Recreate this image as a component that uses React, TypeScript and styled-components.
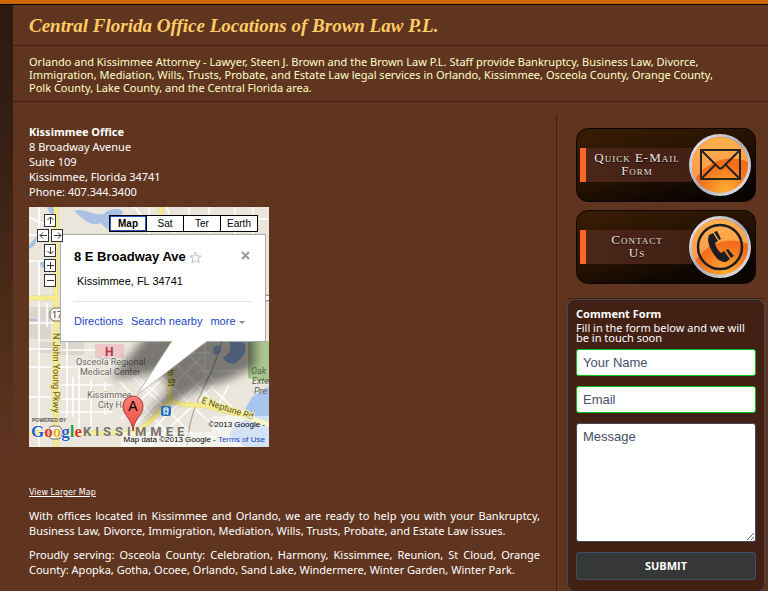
import React from "react";
import styled, { createGlobalStyle } from "styled-components";

const sans = `"Noto Sans", "Open Sans", Verdana, sans-serif`;
const arial = `"Liberation Sans", Arial, sans-serif`;

const GlobalStyle = createGlobalStyle`
  *, *::before, *::after { box-sizing: border-box; }
  body { margin: 0; background: #5f351f; color: #fff; font: 11px/15px ${sans}; }
  h1, h2, h3, p, address { margin: 0; font-style: normal; }
`;

const Page = styled.div`
  min-height: 100vh;
  display: flex;
  flex-direction: column;
  border-top: 4px solid #cc6600;
  overflow: hidden;
`;

const Frame = styled.div`
  flex: 1;
  display: grid;
  grid-template-columns: 13px minmax(0, 1fr);
  border-top: 1px solid #000;
`;

const Edge = styled.div`
  background: linear-gradient(#2b190f, #382013 150px, #5f351f 460px);
`;

const Content = styled.div`
  display: flex;
  flex-direction: column;
`;

const Title = styled.h1`
  padding: 9px 16px 7px;
  border-bottom: 1px solid #42210f;
  color: #ffcc66;
  font: italic bold 19px/24px "Liberation Serif", "Times New Roman", serif;
`;

const Intro = styled.p`
  padding: 9px 36px 7px 16px;
  border-bottom: 1px solid #42210f;
  color: #ffffcc;
  line-height: 13px;
`;

const Columns = styled.div`
  flex: 1;
  display: grid;
  grid-template-columns: minmax(0, 1fr) 211px;
  padding-top: 13px;
`;

const Main = styled.main`
  padding: 9px 16px 8px;
  border-right: 1px solid #42210f;
`;

const Address = styled.address`
  margin-bottom: 8px;
`;

const MapBox = styled.section`
  position: relative;
  width: 240px;
  height: 240px;
  overflow: hidden;
  color: #000;
  font-family: ${arial};
`;

const MapNav = styled.div`
  position: absolute;
  top: 7px;
  left: 8px;
  display: flex;
  flex-direction: column;
  align-items: center;
  gap: 2px;
`;

const NavRow = styled.div`
  display: flex;
  gap: 2px;
`;

const NavButton = styled.button`
  display: grid;
  place-items: center;
  width: 12px;
  height: 13px;
  padding: 0;
  border: 1px solid #333;
  background: #fff;
  svg { width: 9px; height: 9px; stroke: #333; fill: none; }
`;

const MapTypes = styled.div`
  position: absolute;
  top: 8px;
  left: 80px;
  display: grid;
  grid-template-columns: repeat(4, 37px);
`;

const TypeButton = styled.button<{ $active?: boolean }>`
  height: 17px;
  width: 38px;
  padding: 0;
  border: 1px solid #000;
  outline: ${(p) => (p.$active ? "1px solid #2a55b8" : "none")};
  outline-offset: -2px;
  background: #fff;
  color: #000;
  font: ${(p) => (p.$active ? "bold" : "normal")} 10px/15px ${arial};
`;

const InfoWindow = styled.div`
  position: absolute;
  top: 27px;
  left: 31px;
  width: 206px;
  height: 108px;
  padding: 14px 13px;
  border: 1px solid #aaa;
  background: #fff;
  font-size: 11px;
  line-height: 14px;
`;

const PlaceHead = styled.div`
  display: flex;
  align-items: center;
  gap: 3px;
  height: 16px;
`;

const PlaceName = styled.h2`
  font: bold 13px/16px ${arial};
  white-space: nowrap;
`;

const IconButton = styled.button<{ $end?: boolean }>`
  display: flex;
  width: 13px;
  height: 13px;
  margin-left: ${(p) => (p.$end ? "auto" : "0")};
  padding: 0;
  border: 0;
  background: none;
`;

const PlaceAddress = styled.p`
  padding: 9px 3px 13px;
  border-bottom: 1px solid #e6e4df;
`;

const PlaceLinks = styled.div`
  display: flex;
  gap: 8px;
  padding-top: 12px;
  a { color: #1a46c4; text-decoration: none; white-space: nowrap; }
`;

const Credits = styled.div`
  position: absolute;
  right: 0;
  bottom: 0;
  padding: 1px 4px 0 0;
  font-size: 8px;
  line-height: 15px;
  text-align: right;
  white-space: nowrap;
  a { color: #1a46c4; text-decoration: none; }
`;

const LargerMap = styled.a`
  display: block;
  width: fit-content;
  margin: 38px 0 8px;
  color: #fff;
  font-family: "DejaVu Sans", Verdana, sans-serif;
  font-size: 8px;
`;

const Copy = styled.p`
  margin-bottom: 9px;
  text-align: justify;
`;

const Sidebar = styled.aside`
  padding: 13px 3px 0 10px;
`;

const Actions = styled.nav`
  display: flex;
  flex-direction: column;
  gap: 8px;
  padding: 0 9px 14px;
  border-bottom: 1px solid #42210f;
`;

const ActionLink = styled.a`
  display: flex;
  align-items: center;
  height: 74px;
  padding: 0 3px;
  border: 1px solid #0d0602;
  border-radius: 12px;
  background: linear-gradient(165deg, #361b04 10%, #241102 50%, #0a0401 85%);
  color: #eee6df;
  text-decoration: none;
`;

const ActionLabel = styled.span`
  flex: 1;
  display: grid;
  place-items: center;
  height: 34px;
  margin-right: -4px;
  padding: 0 4px 2px 0;
  border-left: 6px solid #ff6622;
  background: linear-gradient(90deg, #4b2619, #422014);
  font: small-caps 13px/13px "Liberation Serif", serif;
  letter-spacing: 1px;
  text-align: center;
  text-shadow: 0 1px 1px #000;
`;

const Badge = styled.svg`
  flex: none;
  width: 64px;
  height: 64px;
`;

const CommentForm = styled.form`
  display: flex;
  flex-direction: column;
  gap: 10px;
  padding: 9px 8px 11px;
  border: 1px solid #434956;
  border-radius: 8px;
  background: #422014;
`;

const FormHead = styled.div`
  display: grid;
  gap: 4px;
  margin-bottom: -4px;
`;

const FormTitle = styled.h3`
  font: bold 11px/10px ${sans};
`;

const FormIntro = styled.p`
  font-size: 11px;
  line-height: 10px;
`;

const Field = styled.input`
  width: 100%;
  height: 27px;
  padding: 0 6px;
  border: 1px solid #00c41a;
  border-radius: 3px;
  background: #fff;
  color: #46506a;
  font: 13px/16px ${arial};
  &::placeholder { color: #46506a; opacity: 1; }
`;

const MessageField = styled(Field)`
  display: block;
  height: 119px;
  padding: 5px 6px;
  border-color: #434c5e;
  resize: both;
`;

const Submit = styled.button`
  height: 28px;
  border: 1px solid #3f4f63;
  border-radius: 3px;
  background: #353836;
  color: #fff;
  font: bold 11px/14px "Open Sans", ${sans};
`;

const streets = [
  "M0 28H30M0 54H30M10 0V26M0 10L26 22M10 54V90M0 116H28M10 92V240M18 96V120",
  "M0 142H26M0 160H26M0 190H22M32 143H84M38 135V210M32 160H60M50 160V225M62 172V225M32 178H84M32 192H58M32 205H84M76 175V208M84 150L132 190M44 170V210",
  "M92 212L150 156M100 224L172 150M112 234L176 170M120 240L186 178M90 174L152 240M104 170L170 234M122 160L192 226M140 150L180 190M150 138L186 174",
  "M104 -2L122 20M120 0V28M138 0L146 26M160 0V26M180 0V26M206 0V27M224 0V27M236 30V134M105 12H240",
  "M176 135V170M160 146H180M168 164H212M180 178L214 210M200 178L188 200M196 210L216 204",
];

function MapDrawing() {
  return (
    <svg width="240" height="240" viewBox="0 0 240 240" role="img" aria-label="Map of Kissimmee" fontFamily="Roboto, sans-serif">
      <defs>
        <filter id="soft" x="-20%" y="-20%" width="140%" height="140%"><feGaussianBlur stdDeviation="4" /></filter>
        <linearGradient id="pin" x1="0" y1="0" x2="0" y2="1"><stop stopColor="#ff8078" /><stop offset="1" stopColor="#e5483f" /></linearGradient>
      </defs>
      <rect width="240" height="240" fill="#ebe6dc" />
      <path d="M0 100H22V132H0ZM8 135H26V146H8ZM30 135H55V148H30Z" fill="#dcd5ce" />
      <path d="M45 4C54 0 64 9 75 7C79 2 90 0 94 5C89 12 101 14 104 22C100 28 77 26 72 16C62 20 55 13 45 4ZM-1 39L8 29L6 38L-1 43ZM18 0C20 6 24 10 28 6V0ZM12 54C18 51 22 57 17 60C12 62 10 58 12 54ZM0 112H8V114H0Z" fill="#a9c1e3" />
      <path d="M219 134H240V176L219 171Z" fill="#abc58f" />
      <path d="M185 140C191 135 195 142 190 147C185 150 183 145 185 140ZM200 135C203 142 200 148 194 150C197 158 206 158 210 153C216 148 219 142 214 134Z" fill="#8fb0e6" />
      <path d="M240 179L223 190L216 202L224 209L205 218L200 229L216 240H240ZM70 148C76 145 82 148 86 146L84 151L71 153Z" fill="#a9c5ee" />
      <g stroke="#fff" strokeWidth="1.6" fill="none">{streets.map((d) => <path key={d} d={d} />)}</g>
      <path d="M158 238C162 190 182 178 193 134" stroke="#aaa79f" strokeWidth="1.2" fill="none" />
      <path d="M27 0V240M0 91H30M132 0V8M0 226H104C120 218 130 205 141 193V134M139 191C150 201 166 196 182 200S218 209 240 218" stroke="#e2d68a" strokeWidth="5" fill="none" />
      <path d="M27 0V240M0 91H30M132 0V8M0 226H104C120 218 130 205 141 193V134M139 191C150 201 166 196 182 200S218 209 240 218" stroke="#f5ec8c" strokeWidth="4" fill="none" />
      <rect x="66" y="137" width="29" height="14" fill="#edc8c7" />
      <text x="76" y="149" fontSize="12" fontWeight="bold" fill="#b63746">H</text>
      <g fontSize="9" fill="#6b6762" stroke="#f2eee8" strokeWidth="2" paintOrder="stroke">
        <text x="47" y="158">Osceola Regional</text><text x="51" y="168">Medical Center</text>
        <text x="58" y="191">Kissimmee</text><text x="69" y="201">City Ha</text>
      </g>
      <g fontSize="9" fill="#5b5530" stroke="#f5ec8c" strokeWidth="2" paintOrder="stroke">
        <text transform="translate(24 126) rotate(90)">N John Young Pkwy</text>
        <text transform="translate(139 157) rotate(90)">ain St</text>
        <text transform="translate(172 196) rotate(18)">E Neptune Rd</text>
      </g>
      <path d="M82 172L118 128H226V160L200 172L165 184L112 214L142 180L128 166Z" fill="#111" opacity=".5" filter="url(#soft)" />
      <g fontSize="9" fontStyle="italic" fill="#526348"><text x="222" y="167">Oak</text><text x="223" y="177">Exte</text><text x="225" y="187">Pre</text></g>
      <rect x="132" y="199" width="10" height="10" rx="2" fill="#2a70bc" />
      <path d="M135 201H139V206H135ZM135 203H139M135 208L136 206M139 208L138 206" stroke="#fff" fill="none" />
      <rect x="183" y="209" width="57" height="16" fill="#fff" opacity=".5" /><rect x="92" y="225" width="148" height="15" fill="#fff" opacity=".5" />
      <g fill="#faf8f0" stroke="#6b6762"><rect x="21" y="101" width="14" height="13" rx="5" /><rect x="19" y="219" width="14" height="13" rx="5" /></g>
      <text x="23" y="111" fontSize="9" fill="#333">17</text>
      <circle cx="238" cy="91" r="3" fill="#fff" stroke="#777" />
      <text x="54" y="229" fontSize="13" fontWeight="bold" letterSpacing="4" fill="#77736e" stroke="#eeeae2" paintOrder="stroke">KISSIMMEE</text>
      <text x="3" y="215" fontFamily="Liberation Sans" fontSize="5" fontWeight="bold" fill="#555">POWERED BY</text>
      <text x="2" y="230" fontFamily="Liberation Serif" fontSize="17" fontWeight="bold" stroke="#fff" strokeWidth="1" paintOrder="stroke">
        <tspan fill="#275dcc">G</tspan><tspan fill="#d73127">o</tspan><tspan fill="#e6b718">o</tspan><tspan fill="#275dcc">g</tspan><tspan fill="#2b9a42">l</tspan><tspan fill="#d73127">e</tspan>
      </text>
      <path d="M104 224C103 211 94 209 94 199A10 10 0 0 1 114 199C114 209 105 211 104 224Z" fill="url(#pin)" stroke="#a83832" />
      <text x="104" y="204" textAnchor="middle" fontFamily="Liberation Sans" fontSize="14" fill="#000">A</text>
    </svg>
  );
}

const WindowTail = styled.svg`
  position: absolute;
  top: 134px;
  left: 106px;
  width: 74px;
  height: 56px;
`;

const arrows = {
  up: "M4.5 8V1M1.5 4L4.5 1L7.5 4", left: "M8 4.5H1M4 1.5L1 4.5L4 7.5",
  right: "M1 4.5H8M5 1.5L8 4.5L5 7.5", down: "M4.5 1V8M1.5 5L4.5 8L7.5 5",
  plus: "M4.5 1V8M1 4.5H8", minus: "M1 4.5H8",
};

function Nav({ kind, label }: { kind: keyof typeof arrows; label: string }) {
  return <NavButton type="button" aria-label={label}><svg viewBox="0 0 9 9"><path d={arrows[kind]} /></svg></NavButton>;
}

function OfficeMap() {
  return (
    <MapBox aria-label="Office location">
      <MapDrawing />
      <InfoWindow>
        <PlaceHead>
          <PlaceName>8 E Broadway Ave</PlaceName>
          <IconButton type="button" aria-label="Save place">
            <svg width="13" height="13" viewBox="0 0 13 13"><path d="M6.5 1L8 5H12L9 7.5L10 12L6.5 9.5L3 12L4 7.5L1 5H5Z" fill="#fff" stroke="#bbb" /></svg>
          </IconButton>
          <IconButton type="button" aria-label="Close" $end>
            <svg width="13" height="13" viewBox="0 0 13 13"><path d="M3 1L10 8M10 1L3 8" stroke="#999" strokeWidth="2" /></svg>
          </IconButton>
        </PlaceHead>
        <PlaceAddress>Kissimmee, FL 34741</PlaceAddress>
        <PlaceLinks>
          <a href="#directions">Directions</a><a href="#nearby">Search nearby</a>
          <a href="#more">more <svg width="6" height="4" viewBox="0 0 6 4"><path d="M0 0H6L3 3Z" fill="#888" /></svg></a>
        </PlaceLinks>
      </InfoWindow>
      <WindowTail viewBox="0 0 74 56"><path d="M37 0L2 54L72 0" fill="#fff" stroke="#bbb" /><path d="M38 0H71" stroke="#fff" strokeWidth="3" /></WindowTail>
      <MapNav>
        <Nav kind="up" label="Pan up" />
        <NavRow><Nav kind="left" label="Pan left" /><Nav kind="right" label="Pan right" /></NavRow>
        <Nav kind="down" label="Pan down" />
        <Nav kind="plus" label="Zoom in" />
        <Nav kind="minus" label="Zoom out" />
      </MapNav>
      <MapTypes>
        <TypeButton type="button" $active>Map</TypeButton><TypeButton type="button">Sat</TypeButton>
        <TypeButton type="button">Ter</TypeButton><TypeButton type="button">Earth</TypeButton>
      </MapTypes>
      <Credits>
        <div>©2013 Google -</div>
        <div>Map data ©2013 Google - <a href="#terms">Terms of Use</a></div>
      </Credits>
    </MapBox>
  );
}

function OrangeDisc({ id, children }: { id: string; children: React.ReactNode }) {
  return (
    <Badge viewBox="0 0 64 64" aria-hidden="true">
      <defs>
        <linearGradient id={id + "ring"} x1="0" y1="0" x2="1" y2="1"><stop stopColor="#f2f2f5" /><stop offset=".5" stopColor="#a9a9b2" /><stop offset="1" stopColor="#eeeef4" /></linearGradient>
        <radialGradient id={id + "glow"} cx=".6" cy=".95" r=".8"><stop stopColor="#ffad32" /><stop offset=".6" stopColor="#f4701c" /><stop offset="1" stopColor="#ee6019" /></radialGradient>
        <linearGradient id={id + "shine"} x1="0" y1="0" x2="0" y2="1"><stop stopColor="#ffb04a" /><stop offset="1" stopColor="#fb9a4c" /></linearGradient>
      </defs>
      <circle cx="32" cy="32" r="31" fill={`url(#${id}ring)`} />
      <circle cx="32" cy="32" r="28" fill={`url(#${id}glow)`} />
      <path d="M4 36A28 28 0 0 1 60 29C42 21 20 27 8 45Q4 42 4 36Z" fill={`url(#${id}shine)`} />
      {children}
    </Badge>
  );
}

export default function App() {
  return (
    <>
      <GlobalStyle />
      <Page>
        <Frame>
          <Edge />
          <Content>
            <Title>Central Florida Office Locations of Brown Law P.L.</Title>
            <Intro>Orlando and Kissimmee Attorney - Lawyer, Steen J. Brown and the Brown Law P.L. Staff provide Bankruptcy, Business Law, Divorce, Immigration, Mediation, Wills, Trusts, Probate, and Estate Law legal services in Orlando, Kissimmee, Osceola County, Orange County, Polk County, Lake County, and the Central Florida area.</Intro>
            <Columns>
              <Main>
                <Address>
                  <strong>Kissimmee Office</strong><br />8 Broadway Avenue<br />Suite 109<br />Kissimmee, Florida 34741<br />Phone: 407.344.3400
                </Address>
                <OfficeMap />
                <LargerMap href="#map">View Larger Map</LargerMap>
                <Copy>With offices located in Kissimmee and Orlando, we are ready to help you with your Bankruptcy, Business Law, Divorce, Immigration, Mediation, Wills, Trusts, Probate, and Estate Law issues.</Copy>
                <Copy>Proudly serving: Osceola County: Celebration, Harmony, Kissimmee, Reunion, St Cloud, Orange County: Apopka, Gotha, Ocoee, Orlando, Sand Lake, Windermere, Winter Garden, Winter Park.</Copy>
              </Main>
              <Sidebar>
                <Actions>
                  <ActionLink href="#email">
                    <ActionLabel><span>Quick E-Mail<br />Form</span></ActionLabel>
                    <OrangeDisc id="mail">
                      <path d="M13 17H52V46H13ZM13 17L30 34Q32.500 37 35 34L52 17M13 46L27 32M52 46L38 32" fill="none" stroke="#29231f" strokeWidth="2" />
                    </OrangeDisc>
                  </ActionLink>
                  <ActionLink href="#contact">
                    <ActionLabel><span>Contact<br />Us</span></ActionLabel>
                    <OrangeDisc id="call">
                      <circle cx="32" cy="32" r="22" fill="none" stroke="#1e1e20" strokeWidth="2.500" />
                      <path d="M21 20L25 18L30 26L27 28Q28 34 33 38L36 36L42 44L38 47Q31 48 25 38Q18 27 21 20Z" fill="#1e1e20" />
                      <path d="M26 17L29 16L33 24L31 25ZM38 35L40 34L46 41L43 43Z" fill="#1e1e20" />
                    </OrangeDisc>
                  </ActionLink>
                </Actions>
                <CommentForm onSubmit={(e) => e.preventDefault()}>
                  <FormHead>
                    <FormTitle>Comment Form</FormTitle>
                    <FormIntro>Fill in the form below and we will be in touch soon</FormIntro>
                  </FormHead>
                  <Field type="text" aria-label="Your Name" placeholder="Your Name" />
                  <Field type="email" aria-label="Email" placeholder="Email" />
                  <MessageField as="textarea" aria-label="Message" placeholder="Message" />
                  <Submit type="submit">SUBMIT</Submit>
                </CommentForm>
              </Sidebar>
            </Columns>
          </Content>
        </Frame>
      </Page>
    </>
  );
}
